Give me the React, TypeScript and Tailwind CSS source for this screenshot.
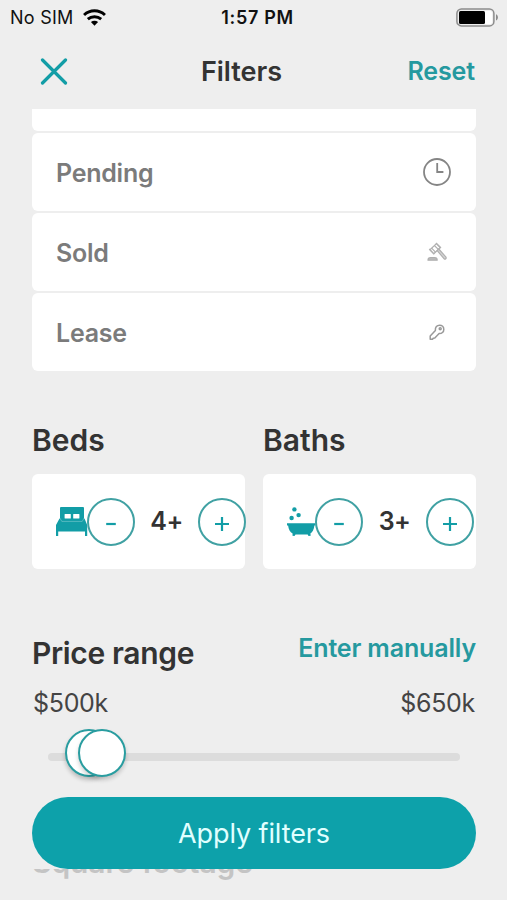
import type { ReactNode } from "react";

interface StatusRowProps {
  label: string;
  icon: ReactNode;
}

interface CounterProps {
  title: string;
  value: string;
  icon: ReactNode;
  controlsClassName: string;
}

function WifiIcon() {
  return (
    <svg width="23" height="17" viewBox="0 0 22 16" fill="none" stroke="#000" strokeWidth="2.8">
      <path d="M1 5.6C6.8 .3 15.2 .3 21 5.6" />
      <path d="M4.6 9.6c3.7-3.2 9.1-3.2 12.8 0" />
      <path d="M7.6 12.4c2-1.7 4.8-1.7 6.8 0L11 16z" fill="#000" stroke="none" />
    </svg>
  );
}

function BatteryIcon() {
  return (
    <svg width="43" height="19" viewBox="0 0 43 19" fill="none">
      <rect x=".9" y=".9" width="37" height="17" rx="4.5" stroke="#8c8c8c" strokeWidth="1.5" />
      <rect x="3" y="3" width="33" height="13" rx="2" fill="#fff" />
      <rect x="3" y="3" width="26" height="13" rx="1.5" fill="#000" />
      <path d="M40 6.3c2.6 1 2.6 5.2 0 6.2z" fill="#8c8c8c" />
    </svg>
  );
}

function ClockIcon() {
  return (
    <svg width="30" height="30" viewBox="0 0 30 30" fill="none" stroke="#858585" strokeWidth="1.8">
      <circle cx="15" cy="15" r="13" />
      <path d="M15.2 6v9h6.2" />
    </svg>
  );
}

function GavelIcon() {
  return (
    <svg width="20" height="20" viewBox="0 0 20 20" fill="none" stroke="#b0b0b0" strokeWidth="1.2" strokeLinejoin="round">
      <path d="M3 7.8 9.4 1.6l3.9 3.9-6.5 6.3z" />
      <path d="m9 1 5 5M2.2 7l5 5.2M4.6 6.2l3.9 3.9M7.4 3.5l3.9 3.9" />
      <path d="m10.2 8.6 1.6-1.6 7.2 8.2c.5 1.3-.6 2.4-1.8 1.7z" fill="#d4d4d4" />
      <path d="M1 18.2c0-1.8 1-2.5 2.5-2.5h4.2c1.5 0 2.5.7 2.5 2.5z" fill="#bdbdbd" />
    </svg>
  );
}

function KeyIcon() {
  return (
    <svg width="16" height="17" viewBox="0 0 16 17" fill="none" stroke="#999" strokeWidth="1.5" strokeLinejoin="round">
      <path d="M6.4 6.4C6 3 8 1.2 10.6 1.2c2.4 0 4.2 1.8 4.2 4.2 0 2.6-2 4.4-4.7 4.2L5.8 14l-1.6.2-.7 1H1.2v-3.3z" />
      <circle cx="11.2" cy="4.7" r="1" />
    </svg>
  );
}

function BedIcon() {
  return (
    <svg className="shrink-0" width="32" height="30" viewBox="0 0 32 30" fill="#129da6">
      <path d="M4 1q0-1 1-1h22q1 0 1 1V13H4z" />
      <path d="M3.5 11.5h25l2.7 6.5v11H29v-4.6H2.2V29H0V18z" />
      <rect x="8.6" y="7" width="6.2" height="4.4" rx=".5" fill="#fff" />
      <rect x="17.2" y="7" width="6.2" height="4.4" rx=".5" fill="#fff" />
      <path d="M3.8 11 5.8 14.4h20.4l2-3.4" fill="none" stroke="#fff" strokeWidth=".7" opacity=".4" />
    </svg>
  );
}

function BathIcon() {
  return (
    <svg className="shrink-0" width="30" height="30" viewBox="0 0 30 30" fill="#129da6">
      <circle cx="7.4" cy="2.4" r="2.2" />
      <circle cx="11.6" cy="8.1" r="2.2" />
      <circle cx="4.6" cy="11" r="2.2" />
      <path d="M0 16.2h28.6v2.3h-1.2c-.5 4-1.8 6.6-4 8l.3 2.2-2.2.3-.8-1.6H8.5l-1 1.6-2-.3.1-2.2c-2.6-1.4-4-4-4.5-8H0z" />
    </svg>
  );
}

function StatusRow({ label, icon }: StatusRowProps) {
  return (
    <div className="flex h-[78px] items-center justify-between rounded-md bg-white px-6">
      <span className="pt-[3px] text-[25px] font-semibold tracking-[-0.25px] text-[#7b7b7b]">{label}</span>
      <span className="flex w-[30px] justify-center">{icon}</span>
    </div>
  );
}

function Counter({ title, value, icon, controlsClassName }: CounterProps) {
  return (
    <div className="w-[213px]">
      <h2 className="text-[30px] leading-9 font-semibold">{title}</h2>
      <div className="mt-4 flex h-[95px] items-center rounded-md bg-white pl-6">
        <span className="flex w-[31px] shrink-0">{icon}</span>
        <div className={controlsClassName}>
          <button className="flex size-12 shrink-0 items-center justify-center rounded-full border-2 border-[#40a1a3] text-[#129da6]">
            <svg width="14" height="14" viewBox="0 0 14 14" className="mt-1" stroke="currentColor" strokeWidth="2.2">
              <path d="M2.2 7h9.6" />
            </svg>
          </button>
          <span className="w-[63px] text-center text-[25px] font-semibold tracking-[-0.5px]">{value}</span>
          <button className="flex size-12 shrink-0 items-center justify-center rounded-full border-2 border-[#40a1a3] text-[#129da6]">
            <svg width="14" height="14" viewBox="0 0 14 14" className="mt-1" stroke="currentColor" strokeWidth="2.2">
              <path d="M0 7h14M7 0v14" />
            </svg>
          </button>
        </div>
      </div>
    </div>
  );
}

export default function App() {
  return (
    <div className="relative h-[900px] w-[507px] overflow-hidden bg-[#eeeeee] font-['Inter',sans-serif] text-[#333333]">
      <div className="grid h-[34px] grid-cols-3 items-center pr-2 pl-[10px] text-[#111111]">
        <div className="flex items-center gap-[9px] text-[18px]">
          <span className="tracking-[0.25px]">No SIM</span>
          <WifiIcon />
        </div>
        <div className="pl-1.5 text-center text-[18px] font-semibold tracking-[0.7px] whitespace-nowrap">1:57 PM</div>
        <div className="flex justify-end">
          <BatteryIcon />
        </div>
      </div>

      <header className="grid h-[75px] grid-cols-3 items-center px-8">
        <button className="ml-2 w-7">
          <svg width="28" height="28" viewBox="0 0 28 28" stroke="#129da6" strokeWidth="3.2" strokeLinecap="round">
            <path d="m2.5 2 23 23m0-23-23 23" />
          </svg>
        </button>
        <h1 className="-ml-6 pt-0.5 text-center text-[27px] font-semibold">Filters</h1>
        <button className="text-right text-[25px] font-semibold tracking-[-0.1px] text-[#25999f]">Reset</button>
      </header>

      <main className="pr-[31px] pl-8">
        <div className="flex flex-col gap-0.5">
          <div className="h-[22px] rounded-b-md bg-white" />
          <StatusRow label="Pending" icon={<ClockIcon />} />
          <StatusRow label="Sold" icon={<GavelIcon />} />
          <StatusRow label="Lease" icon={<KeyIcon />} />
        </div>

        <div className="mt-[51px] flex justify-between">
          <Counter title="Beds" value="4+" icon={<BedIcon />} controlsClassName="flex items-center" />
          <Counter title="Baths" value="3+" icon={<BathIcon />} controlsClassName="-ml-[3px] flex items-center" />
        </div>

        <div className="mt-[66px] flex items-start justify-between">
          <h2 className="text-[30px] leading-9 font-semibold tracking-[-0.35px]">Price range</h2>
          <button className="text-[25px] leading-[27px] font-semibold tracking-[-0.15px] text-[#25999f]">
            Enter manually
          </button>
        </div>
        <div className="mt-4 flex justify-between text-[25px] leading-8 tracking-[-0.3px] text-[#444444]">
          <span className="pl-px">$500k</span>
          <span className="pr-px">$650k</span>
        </div>

        <div className="relative mx-4 mt-[34px] h-2 rounded-sm bg-[#dcdcdc]">
          <div className="absolute -top-6 left-[17px] size-12 rounded-full border-2 border-[#299da0] bg-white shadow-[0_3px_4px_rgba(0,0,0,0.22)]" />
          <div className="absolute -top-6 left-[30px] size-12 rounded-full border-2 border-[#299da0] bg-white shadow-[0_3px_4px_rgba(0,0,0,0.18)]" />
        </div>

        <h2 className="mt-[83px] text-[30px] leading-9 font-semibold tracking-[-0.1px] text-[#c4c4c4]">
          Square footage
        </h2>
      </main>

      <div className="absolute inset-x-0 bottom-[31px] bg-[#eeeeee] pr-[31px] pl-8">
        <button className="block h-[72px] w-full rounded-full bg-[#0da1aa] pt-0.5 text-[27px] tracking-[-0.1px] text-[#e0ffff]">
          Apply filters
        </button>
      </div>
    </div>
  );
}
